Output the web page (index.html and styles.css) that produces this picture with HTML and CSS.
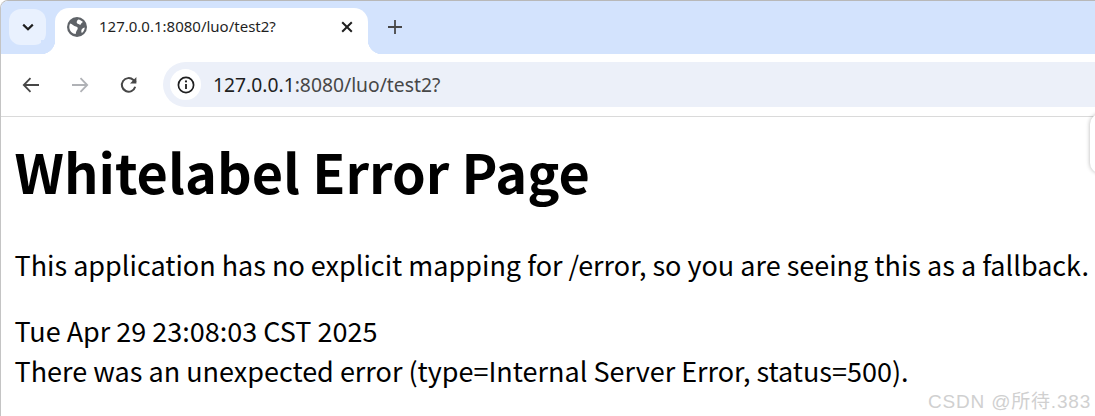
FILE: index.html
```html
<!DOCTYPE html>
<html lang="en">
<head>
<meta charset="utf-8">
<title>127.0.0.1:8080/luo/test2?</title>
<link rel="stylesheet" href="styles.css">
</head>
<body>
<div class="window">
  <div class="tabstrip">
    <div class="tabsearch">
      <svg width="16" height="16" viewBox="0 0 16 16"><path d="M3.200 5.600 8 10.200l4.800-4.600" fill="none" stroke="#1f1f1f" stroke-width="2.200"/></svg>
    </div>
    <div class="tab">
      <svg class="favicon" width="20" height="20" viewBox="0 0 20 20"><circle cx="10" cy="10" r="10" fill="#5f6368"/><path d="M11.200 2.400c1.900.3 3.600 1.200 4.800 2.700-1.200.6-2 1.500-2.700 2.900-1-.8-2.600-.7-3.400-1.900-.6-1 .2-2.900 1.300-3.700zM3.200 6.600c1.700.5 3.700 2.500 5.700 3 2.100.5 2.200 2 1.400 3.100-.8 1-1.400 2.400-1.600 4.400C5.400 16.700 2.400 14 2.300 10c0-1.300.3-2.400.9-3.400zM17.700 10.400c0 2.200-1 4.200-2.900 5.600-.6-1.400-.8-2.900.2-4 .7-.8 1.700-1.400 2.700-1.600z" fill="#fff"/></svg>
      <span class="tabtitle">127.0.0.1:8080/luo/test2?</span>
      <svg class="tabclose" width="12" height="12" viewBox="0 0 12 12"><path d="M1.200 1.200l9.600 9.600M10.800 1.200l-9.600 9.600" stroke="#1f1f1f" stroke-width="2" fill="none"/></svg>
    </div>
    <svg class="newtab" width="14" height="14" viewBox="0 0 14 14"><path d="M7 0v14M0 7h14" stroke="#474747" stroke-width="1.800" fill="none"/></svg>
  </div>
  <div class="toolbar">
    <div class="nav">
      <svg width="18" height="16" viewBox="0 0 18 16"><path d="M17 8H2M8.500 1.200 1.800 8l6.700 6.800" fill="none" stroke="#474747" stroke-width="1.800"/></svg>
      <svg width="18" height="16" viewBox="0 0 18 16"><path d="M1 8h15M9.500 1.200 16.200 8l-6.700 6.800" fill="none" stroke="#b0b2b6" stroke-width="1.800"/></svg>
      <svg width="18" height="18" viewBox="0 0 18 18"><path d="M15.200 10.800A6.800 6.800 0 1 1 13.400 4L15.800 6.300" fill="none" stroke="#474747" stroke-width="2"/><path d="M16.400 1v6.400H10z" fill="#474747"/></svg>
    </div>
    <div class="omnibox">
      <div class="siteinfo">
        <svg width="18" height="18" viewBox="0 0 18 18"><circle cx="9" cy="9" r="7.600" fill="none" stroke="#1f1f1f" stroke-width="1.700"/><path d="M9 8v5" stroke="#1f1f1f" stroke-width="1.800"/><circle cx="9" cy="5.400" r="1.100" fill="#1f1f1f"/></svg>
      </div>
      <span class="url"><span class="host">127.0.0.1</span>:8080/luo/test2?</span>
    </div>
  </div>
  <main class="page">
    <h1>Whitelabel Error Page</h1>
    <p class="lead">This application has no explicit mapping for /error, so you are seeing this as a fallback.</p>
    <div class="time">Tue Apr 29 23:08:03 CST 2025</div>
    <div class="detail">There was an unexpected error (type=Internal Server Error, status=500).</div>
    <div class="sidehandle"></div>
  </main>
</div>
<div class="watermark">CSDN @所待.383</div>
</body>
</html>
```
FILE: styles.css
```css
html, body {
  margin: 0;
  padding: 0;
  height: 416px;
  overflow: hidden;
  background: #fff;
}
body {
  position: relative;
  font-family: "Noto Sans CJK SC", "Noto Sans", sans-serif;
  color: #000;
}
.window {
  height: 416px;
  box-sizing: border-box;
  border-left: 1px solid #c4c4c4;
  border-top: 1px solid #b8b8b8;
  border-top-left-radius: 8px;
  overflow: hidden;
  display: flex;
  flex-direction: column;
}
.tabstrip {
  height: 53px;
  flex: none;
  background: #d3e3fd;
  display: flex;
  align-items: flex-end;
  box-sizing: border-box;
  padding-left: 8px;
}
.tabsearch {
  width: 37px;
  height: 36px;
  margin-bottom: 9px;
  border-radius: 12px;
  background: #e9f1fe;
  display: flex;
  align-items: center;
  justify-content: center;
}
.tab {
  position: relative;
  width: 313px;
  height: 46px;
  margin-left: 9px;
  background: #fff;
  border-radius: 14px 14px 0 0;
  display: flex;
  align-items: center;
  padding: 0 15px 8px 12px;
  box-sizing: border-box;
}
.tab::before, .tab::after {
  content: "";
  position: absolute;
  bottom: 0;
  width: 14px;
  height: 14px;
  background: radial-gradient(circle at 0 0, #d3e3fd 14px, #fff 14.5px);
}
.tab::before {
  left: -14px;
}
.tab::after {
  right: -14px;
  background: radial-gradient(circle at 100% 0, #d3e3fd 14px, #fff 14.5px);
}
.favicon {
  flex: none;
}
.tabtitle {
  margin: 0 0 2px 12px;
  flex: 1;
  font: 15px "Noto Sans", "Liberation Sans", sans-serif;
  color: #1f1f1f;
}
.tabclose {
  flex: none;
}
.newtab {
  margin: 0 0 20px 20px;
}
.toolbar {
  height: 63px;
  flex: none;
  display: flex;
  align-items: center;
  box-sizing: border-box;
  border-bottom: 1px solid #dadada;
  padding: 0 0 1px 21px;
  background: #fff;
}
.nav {
  display: flex;
  align-items: center;
  gap: 31px;
}
.omnibox {
  flex: 1;
  margin-left: 25px;
  height: 45px;
  border-radius: 23px 0 0 23px;
  background: #ecf0f9;
  display: flex;
  align-items: center;
  padding-left: 7px;
}
.siteinfo {
  width: 31px;
  height: 31px;
  border-radius: 50%;
  background: #fff;
  display: flex;
  align-items: center;
  justify-content: center;
}
.url {
  margin-left: 12px;
  font: 19.300px "Noto Sans", "Liberation Sans", sans-serif;
  color: #474747;
}
.host {
  color: #1f1f1f;
}
.page {
  position: relative;
  flex: 1;
  padding: 21px 0 0 13.500px;
}
h1 {
  margin: 0;
  font-size: 54px;
  line-height: 66px;
  font-weight: 700;
}
.lead {
  margin: 41px 0 0;
  font-size: 27px;
  line-height: 40px;
  white-space: nowrap;
}
.time {
  margin-top: 26px;
  font-size: 27px;
  line-height: 40px;
}
.detail {
  font-size: 27px;
  line-height: 40px;
  white-space: nowrap;
}
.sidehandle {
  position: absolute;
  left: 1089px;
  top: -3px;
  width: 20px;
  height: 59px;
  box-sizing: border-box;
  border-radius: 10px;
  background: #fff;
  box-shadow: 0 0 4px rgba(0, 0, 0, .3);
}
.watermark {
  position: absolute;
  right: 4px;
  bottom: 3px;
  font: 19px "Liberation Sans", "Noto Sans CJK SC", sans-serif;
  letter-spacing: .8px;
  color: #d0d0d0;
  white-space: nowrap;
}
```
